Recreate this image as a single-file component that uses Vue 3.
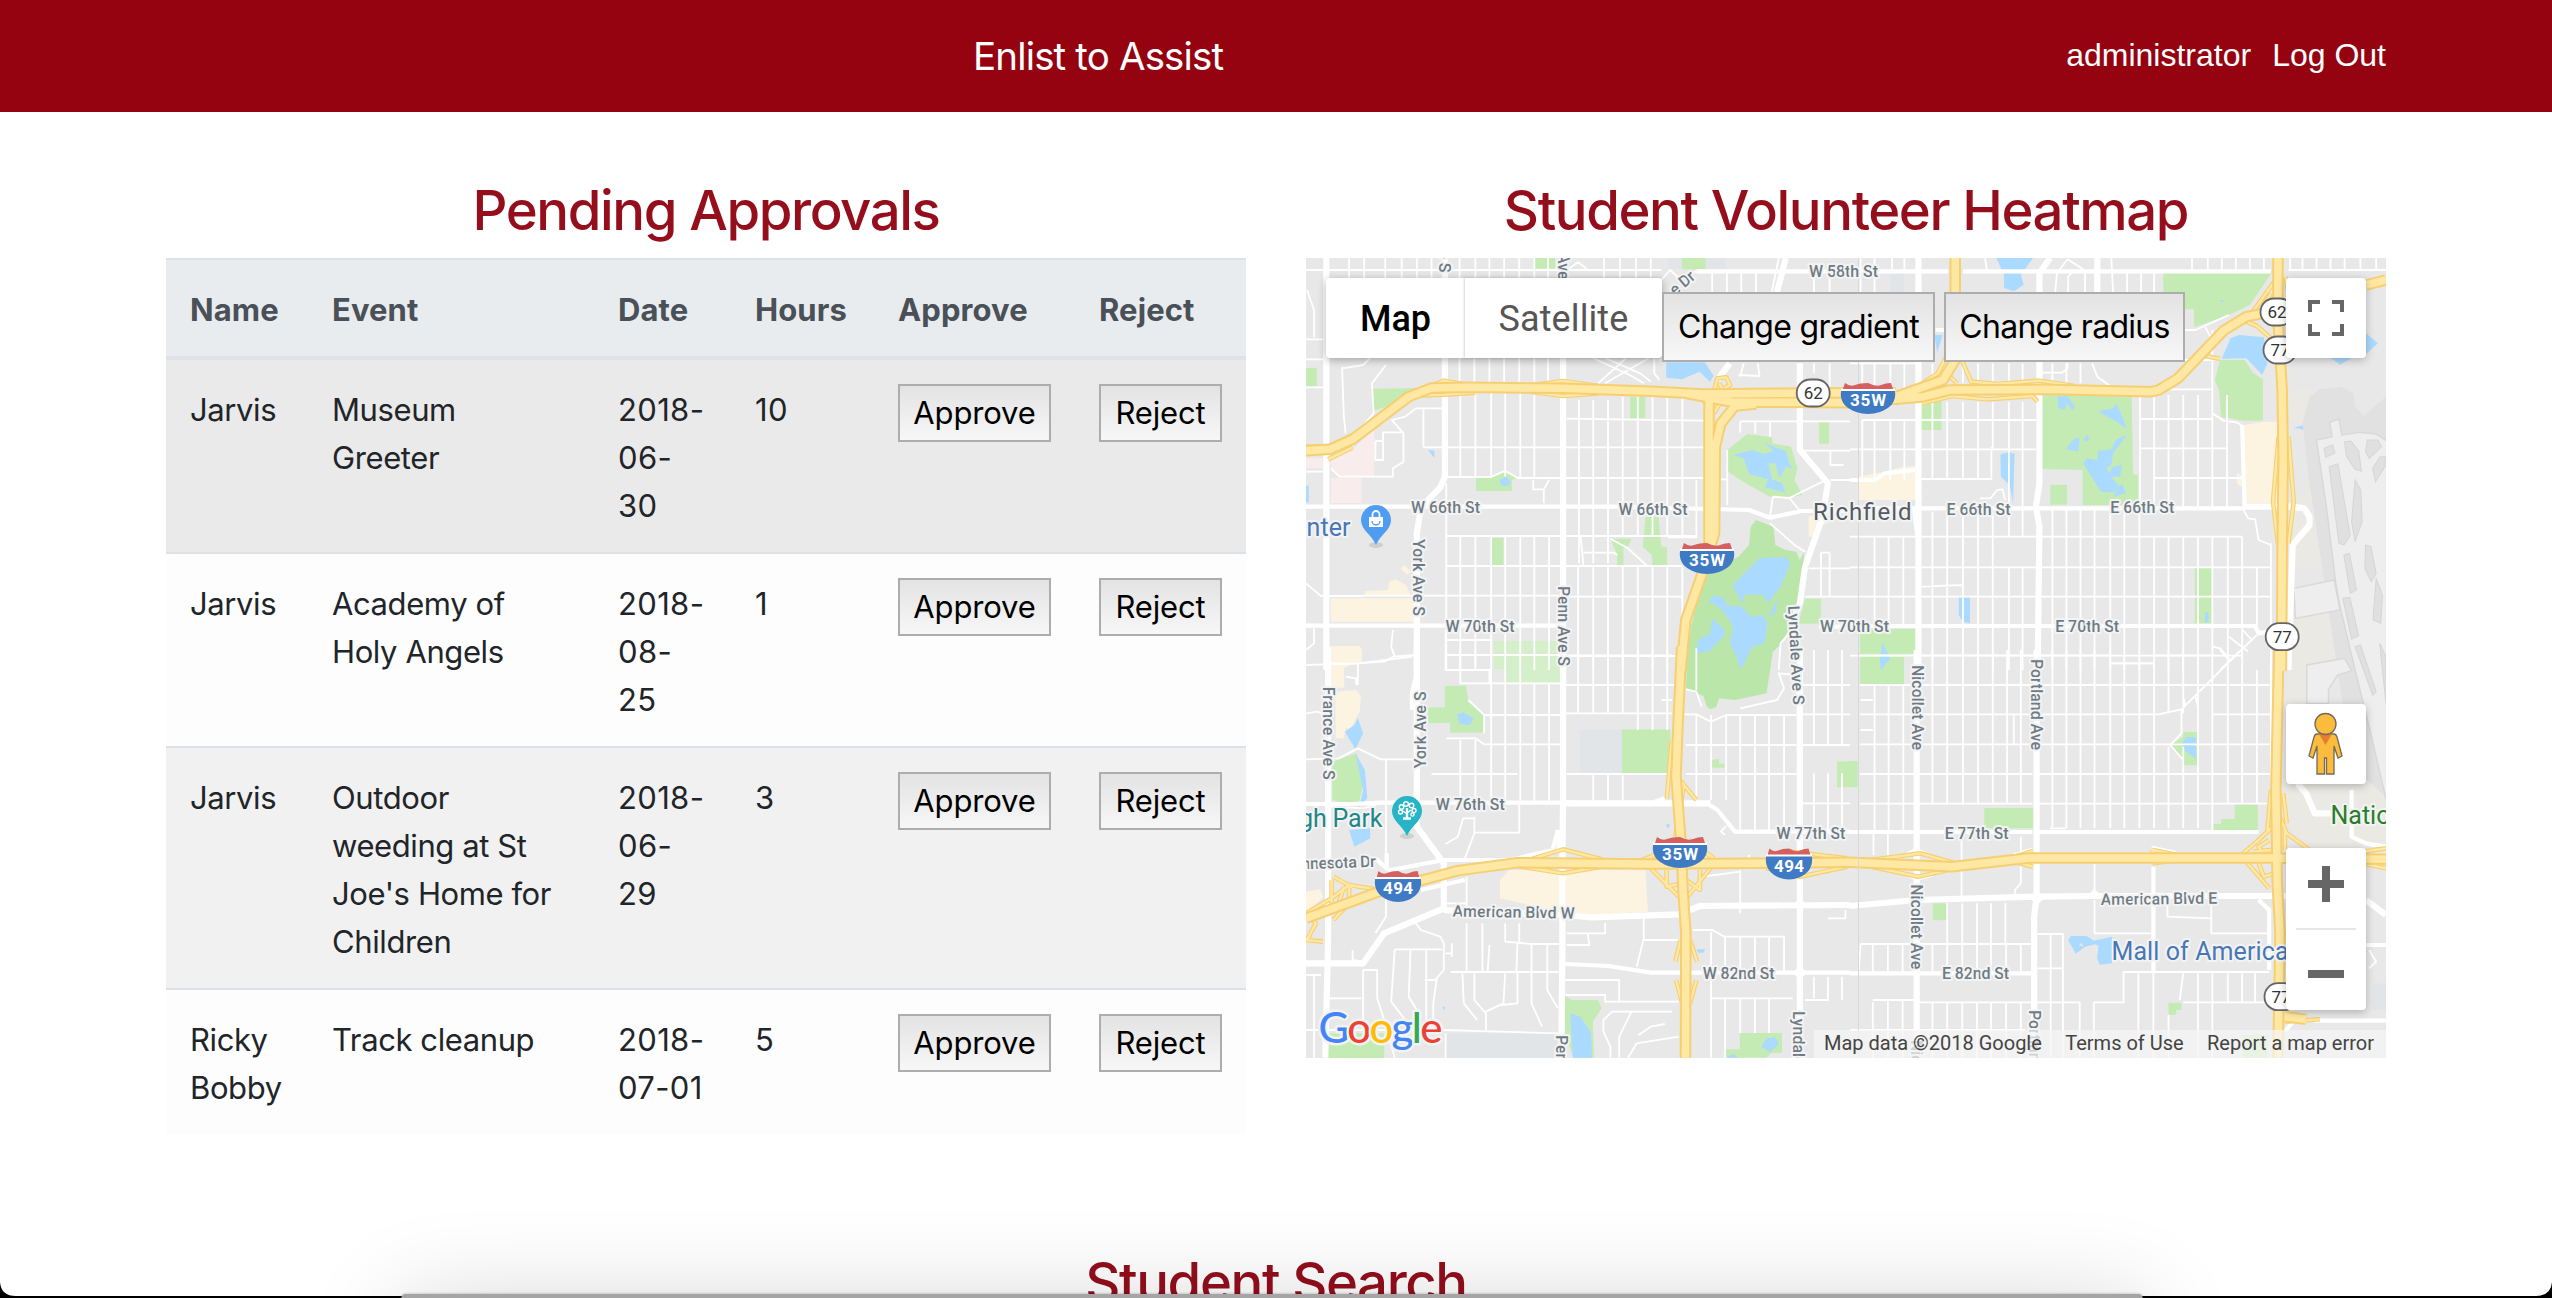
<script setup>
const rows = [
  { name: 'Jarvis', event: 'Museum\nGreeter', date: '2018-\n06-\n30', hours: 10 },
  { name: 'Jarvis', event: 'Academy of\nHoly Angels', date: '2018-\n08-\n25', hours: 1 },
  { name: 'Jarvis', event: "Outdoor\nweeding at St\nJoe's Home for\nChildren", date: '2018-\n06-\n29', hours: 3 },
  { name: 'Ricky\nBobby', event: 'Track cleanup', date: '2018-\n07-01', hours: 5 },
]

// The map is made of four tiles, each with its own coordinate system.
const v = (xs, y1, y2) => xs.map((x) => `M${x} ${y1}V${y2}`).join('')
const h = (ys, x1, x2) => ys.map((y) => `M${x1} ${y}H${x2}`).join('')

const nw = {
  t: 'translate(1300 250) scale(.35077 .33333)',
  slate: 'M1048 24h41v34h-41zM1156 24h58v34h-58z',
  pink: 'M212 530V680H110L88 655V615L150 600zM17 625H66V655H17zM88 684h87v75H88z',
  cream: 'M88 1045h240v70H88zM287 957l10-12 18 18-8 12zM185 1037v-14l65-3 5-25 18-7 30 17 12 32zM88 1188h80l8 10v38H88zM1450 800l55-15v35l-30 5-5 35h-20z',
  green: 'M667 24h60v32h-60zM1089 24h67v34h-67zM17 354h31v55H17zM206 416L365 414L330 440L206 484zM941 440h43v65h-43zM1480 516h28v65h-28zM1218 600L1275 552L1345 562L1348 580L1400 590L1418 655L1410 690L1432 735L1400 742L1340 740L1270 700L1220 665zM502 684H545L585 665L620 684L604 690V723H502zM545 864h35v81h-35zM985 800H1022L1030 890H1046V948H1005L1003 915L977 890zM885 866H945L935 890L922 895V948H904V915zM1440 1046h45v75h-65z',
  dark: 'M1300 810L1350 830L1355 885L1385 900L1415 905L1425 930L1437 905L1430 1010L1405 1110L1375 1180L1348 1205L1330 1330L1240 1350L1195 1345L1187 1370L1170 1378L1160 1370L1150 1338L1100 1315L1105 1200L1115 1130L1150 975L1250 920L1280 885L1285 830z',
  light: 'M553 1173H730L748 1200V1300H587V1258H553z',
  water: 'M1044 337h110l25 40-10 18-30-30-50 23-45-5zM365 600l18 2v22zM1235 615L1290 600L1320 612L1350 604L1325 580L1385 603L1395 640L1405 655L1385 650L1367 684L1355 640L1335 640L1345 688L1375 700L1383 728L1325 712L1335 688L1280 672L1265 625zM568 690l20-11 12 18-5 12-20-2zM17 707h8v50h-8zM1310 925L1385 920L1398 940L1370 1010L1335 1060L1320 1035L1270 1033L1260 1060L1233 1005zM1362 1045L1355 1090L1335 1100zM1180 1035L1210 1045L1215 1065L1260 1070L1285 1100L1320 1095L1333 1120L1325 1180L1290 1190L1257 1258L1240 1210L1225 1180L1235 1130L1200 1075L1165 1055zM1175 1105L1210 1140L1208 1160L1165 1205L1130 1210L1135 1170L1170 1150z',
  minor:
    h([60], 17, 1030) + v([140, 183, 243, 290, 333, 375, 455, 500, 540, 582, 625, 668, 707, 867, 912, 958, 1000], 24, 90) +
    v([455, 497, 540, 582, 625, 668, 707], 324, 395) + 'M793 36L765 58M793 36L818 58' +
    v([795, 836, 878], 450, 940) + v([920, 963, 1005, 1047, 1090], 440, 860) + v([793, 836, 878, 920, 963, 1005, 1047, 1090], 950, 1260) +
    v([457, 500, 545, 585, 628, 668, 710], 858, 1260) + v([457, 500, 545, 585, 628, 668], 420, 680) + v([795, 836, 878, 920, 963], 690, 860) +
    'M760 506L1155 512M352 592H1150M352 592V475M417 681H545L585 662L620 684H1150M417 858H1130M1130 690V862H1050M415 948H1090M755 1040H1090M180 1037H745M415 1170H545M415 1215H545M755 1218H1070M417 700V1260' +
    'M17 412L68 412M17 328H70M17 268H66M20 120L40 180V262M17 665H66M88 655L112 680H265V655L295 635V550L262 510L300 500L330 475H405M215 573H237V547H290M237 573V630H215V573M120 350L125 500L130 550M120 355L180 345L200 324M245 345L205 400L210 490L165 545' +
    'M665 690V718H695L710 690M695 718V760M800 860L808 945M808 908H895L905 915M885 866L935 895L990 948M835 324L940 375L980 400M870 324L970 370L1000 395M995 324L870 400M930 324L850 400M1010 324V370L1025 390' +
    'M1255 515V548M1255 514H1568M1298 514V550M1340 514V560M1218 600V765M1348 740L1340 800M1348 740L1395 744L1490 695M1395 744L1425 782M1340 820L1410 885L1440 905M1190 688H1218M1425 602H1568M1512 602V645H1550M1512 690H1568M1450 955H1568M1485 908V1040M1510 908V1040M1485 908H1510M1440 1040H1568M1410 1130L1370 1180L1365 1260' +
    'M1030 90L1055 60L1080 84L1130 64M1175 64V126M1217 64V126M1258 64V126M1300 64V126M1365 24L1345 126M1465 64V126M1510 64V126M1255 380L1265 340M1250 375L1310 378L1305 340M1465 340V370M1510 340V412' +
    'M17 1000L60 1038H180M88 1240H165L320 1220M265 1140L260 1190L270 1220M40 1135V1180L17 1200',
  mid: 'M17 770H900L1280 780L1340 803L1430 783H1568M17 1127H750M1480 1130H1568M1130 64H1568',
  major: 'M75 24V1260M413 24V680L400 712L345 772L333 850V1260M750 24V1260M1425 340V600L1505 700L1490 800L1440 950L1425 1060L1405 1110M1385 24L1360 126M1225 340L1190 390',
  ramps: 'M340 422L410 392L500 408M340 436L410 434L500 428M660 406L750 393L850 408M660 426L750 438L850 430M1180 425L1190 385L1215 382L1226 405L1205 418L1195 400M17 590L80 590L150 555M80 628L150 592M1150 450L1170 480M1270 432L1200 455L1180 490',
  high: 'M17 602L85 598L150 568L310 440L375 414L480 412L750 415L1000 424L1150 432L1568 428M1100 430L1230 456L1568 458M1166 450V880L1150 960M1300 462L1240 468L1200 520L1184 590L1182 850L1150 960L1100 1110L1086 1262',
}

const ne = {
  t: 'translate(1850 250) scale(.35077 .33333)',
  slate: 'M115 70h38v56h-38zM1500 500h28v60h-28z',
  beige: 'M1250 422H1380V515H1250zM1262 760L1330 700L1410 950H1262zM1255 1110L1400 1080L1430 1200L1300 1300L1250 1300z',
  cream: 'M1122 525L1180 515H1220V758H1130L1122 715L1103 700V668L1122 680zM22 680L100 665L150 650L190 648V690L205 700V750H22z',
  green: 'M893 64H1205L1140 165L1080 195L981 232V178H893zM1055 330L1125 330L1150 370L1177 388V512L1120 512L1058 500L1052 420L1040 390zM545 435H803L807 672L821 676V765H663V660L545 657zM571 704h48v60h-48zM204 452h57v88h-57zM983 954h49v166h-49zM29 1137h159v84h-34v82H29z',
  water: 'M417 24h105l-35 50 8 30-28 20-28-10v-40zM240 255h24l-15 52zM1060 326L1085 265L1110 255L1180 262L1190 340L1175 375L1130 325zM1471 250L1505 280L1471 312zM1370 324h60l-32 20zM429 613L455 606L469 612L465 758L455 705L430 680zM592 440l25-5 25 35-8 12-15-22-8 20-17-5zM713 480L745 478L760 462L772 490L790 538L760 515L715 490zM615 597l25-32 15-2-5 42zM665 570l10-15 8 10-8 10zM790 555L775 575L750 610L745 645L730 655L740 668L750 650L775 645L770 680L745 680L770 715L750 728L715 725L665 640L675 625L705 630L708 602L745 598L760 568zM750 740l25-40 12 30zM310 1040h32v80l-20-5-12-20zM1012 1087h10v30h-10zM92 1178L115 1225L88 1262L85 1230zM1055 150h10v6h-10zM1265 533l30-8v14z',
  minor:
    v([35, 70, 115, 155], 340, 420) + v([35, 70, 115, 155], 510, 690) + v([235, 277, 322, 365, 407, 453, 492], 455, 598) + v([235, 277, 322, 365, 403], 590, 687) +
    v([235, 277, 322, 365, 407], 785, 1260) + v([453, 492], 460, 860) + v([453, 492], 950, 1260) + v([577, 617, 657, 697, 742, 782, 825], 780, 1260) +
    v([867, 908, 950, 992, 1033, 1077, 1118], 860, 1260) + v([867, 908, 950, 992, 1033, 1075], 435, 770) + v([1160], 950, 1130) + 'M827 435V770M1200 880V1260' +
    v([70, 110, 152], 860, 1130) + v([235, 277, 322, 365, 407, 453, 492], 340, 400) + v([577, 617, 657], 340, 400) +
    h([510], 35, 190) + h([510], 204, 530) + h([598], 0, 530) + h([687], 200, 405) + h([860, 952, 1040, 1217], 0, 1118) + h([952, 1040], 1100, 1200) + 'M827 507H1035M827 595H1075M867 684H1118M867 418H1033M1033 240V490L1065 512L1105 518L1122 530M955 240H985L1080 195M955 330H1040M1010 225L1035 275M690 340L705 380L745 410M620 340V355L605 368H540M200 1010L322 1005V952M0 340H190M370 745L400 745L420 720L435 718L442 750M120 24V60M70 24V126M30 24V126M155 24V60' +
    'M385 24L390 60M620 28L665 58M620 28L590 70L585 126M640 60L622 80V126M670 60V126M745 24L750 126M790 60V126M830 60V126M867 60V126M975 24V60M1020 24V60M1060 24V60M1100 24V60M1140 24V60M1180 24V60M1255 24V60M1290 24V60M1330 24V60M1370 24V60M1410 24V60M1455 24V60M1500 24V60M1250 60H1528' +
    'M1120 775L1135 805L1155 808L1165 870L1200 885M1055 1260L1160 1155M1120 1140L1145 1170M1080 1160L1135 1205M1035 1190L1055 1195L1085 1230M742 1217V1260M742 1240H867',
  mid: 'M0 64H280M322 64H1200M0 775H1120M0 1128H1155L1165 1150L1190 1145M0 690H70L100 670L185 660M1118 525L1125 770M244 240H268',
  major: 'M195 24V1260M540 126V70L570 24M540 330V700L530 770L540 830L535 1260M705 24V126M1120 770H1260L1295 775L1310 800L1310 825L1262 885L1250 1260M185 775L195 860',
  ramps: 'M200 405L250 370L275 320M315 320L345 395L420 402L540 392L640 408M205 460L290 438L390 448L520 438L535 455M285 380L305 400M1220 80L1145 190M1200 130L1160 200M1130 215L1160 228L1200 265M1000 310L1030 322L1055 326M1242 80L1248 120M1250 560L1265 755L1250 880M1222 560L1206 755L1220 880M1160 180L1222 240M1222 120L1205 170',
  high: 'M0 428H130M0 455L130 448L210 440L285 420L545 418L860 425L880 420L935 385L1065 242L1130 200L1222 182M300 24V330L265 390L130 440M1220 24V200L1232 420L1235 620L1232 900L1230 1262M1471 105L1528 90',
}

const sw = {
  t: 'translate(1300 650) scale(.35077 .33333)',
  slate: 'M797 238h122v132H797zM410 1150H740V1224H410z',
  cream: 'M88 0h88v33l-50 20v60H88zM100 125L160 120L174 140L170 185L145 235H130L125 265H102zM17 725l40-8 10 25-50 45zM570 690L595 660H985L992 785L830 795L760 790L570 745z',
  green: 'M413 107H473L480 155L525 195V248H428V218L365 220V172H413zM918 238h138v132H918zM1175 330l20-4v15h15v12h-35zM1531 334h37v78h-37zM92 335L160 310L185 380L165 470L92 450zM755 1037L775 1050H850L860 1075L835 1115L838 1223H780L755 1150zM80 1150h160v75H80zM1254 1149h120v60h-30l-15 14h-115v-25h40z',
  water: 'M155 225L165 205L180 250L158 298L128 245zM158 310L185 360L192 445L168 472L180 420L172 380zM448 195L465 187L495 205L485 225L455 222zM140 540L200 535V565L155 590zM1130 898h25l-5 10-15 0zM1043 524l12-2-5 14zM1315 1190l15-25 25-3 10 20-25 25zM405 1070h8v12zM770 1090L800 1100L830 1150L832 1223H778zM1215 1223l20-12 14 12z',
  minor:
    v([457, 500], 0, 60) + v([545, 585, 628], 60, 280) + v([668, 710], 100, 280) + v([793, 836, 878, 920], 0, 190) + v([963, 1005, 1047], 0, 240) +
    v([836, 878, 920], 375, 450) + v([457, 500, 545, 585], 270, 455) + v([628, 668, 710], 285, 455) +
    v([1130, 1172, 1215], 195, 450) + v([1255, 1297, 1337, 1380], 195, 545) + v([1465, 1505, 1545], 0, 285) + v([1465, 1505, 1545], 370, 545) +
    'M415 -60V60H540V100M457 60V100H750M415 15H750M755 16H1060M755 105H1070M525 195H745M755 190H1060M1095 193H1130L1172 215L1215 195H1415M1130 -5V120M1100 118L1130 125L1145 170M1100 285H1415M1100 372H1415M760 372H1055M620 372H375M417 265H500L525 283H745M1430 105H1568M1430 285H1568M1430 193H1568M1430 460H1568M1255 175L1360 150L1380 115L1365 70L1415 75M1030 150H1060M480 150L525 195V250' +
    'M17 45L165 40L240 35L265 20L330 15M165 40V105M17 190L50 185L75 195M17 328L110 325L165 295L230 328H330M245 325V620L250 660M88 470L180 475L230 460M375 458L415 460M495 505L465 505L450 560L415 582M497 500V550L470 625M500 548H625V465M1215 528L1200 545L1212 555M1280 615V640' +
    'M245 690V800L215 850M475 680V800M415 760H475M415 780H430M330 820L345 840L400 860L410 880V960L385 990H355M433 880V920M415 910H433M270 898H405M270 898L260 1055L300 1110M315 900L310 1040L345 1100M360 900V1130M390 985L380 1060V1130M430 966H745M475 820V966M520 820V966M585 820V875L660 882H745M625 820V875M660 882V1060L690 1130M705 882V1020L735 1075M540 885L535 966M620 880L617 966M463 970L467 1060L505 1110M497 970V1050L530 1090V1140M585 970L580 1060L530 1085M760 850H870V820M820 850L825 885H760M620 970V1060L575 1065' +
    'M980 790V865L960 950M980 870H1080M755 990H910V1055M755 1035H870V1055H1080M890 1085H1060M890 1085L865 1110V1145L885 1190V1223M945 1085L910 1160V1223M965 1155L1000 1130L1040 1122M1080 1160L960 1180L935 1223M1120 840H1175L1210 860H1380V966M1172 845V1223M1212 860V966M1255 660V790M1255 860V966M1297 860V966M1337 860V966M1150 680L1255 665M1505 805H1555V780M1172 1045H1405M1212 1045V1223M1255 1045V1149M1297 1045V1149M1337 1045V1149M1465 980V1045M1505 980V1050H1440M1545 980V1050' +
    'M17 1140H410L740 1150M415 1150V1223M80 1045H175M180 960H220L220 1045L240 1110L270 1223M180 960V1130M17 975H60M40 975V1223M150 900V930L180 935M130 80L160 85V105M750 1035H760',
  mid: 'M17 462H150L230 458H800M250 662L410 630H600L720 600L735 540M1100 460H1160L1190 480L1240 545H1568M755 942L880 948L1000 968H1568M17 655L50 640M247 610V655L215 625M345 720L470 690M1430 546H1568M1040 445L1000 460',
  major: 'M80 -10V880L72 1223M333 -10V530L410 640V775L240 850L200 910L180 940H17M333 80L322 130V180M750 -10V440L748 640V900L745 1223M1425 -10V1223M750 460H1170M410 780L480 785L760 795L830 802L1080 793L1140 768L1568 765M740 540V600M1417 765L1425 757L1433 765L1425 773ZM1417 968L1425 960L1433 968L1425 976Z',
  ramps: 'M17 790L90 745L140 705L215 718M95 680L150 712M90 690V770M140 712V760L95 810M20 870L45 820L30 800M17 870L65 875M125 712L110 760M620 640L750 598L860 628M620 648L750 670L860 650M990 628L1060 580M1180 625L1110 570M1000 655L1080 740M1170 655L1105 740M1045 660V710L1090 700M1140 660V720L1100 690M1060 270L1046 445M1075 380L1130 450M1095 400L1070 560M1330 628L1400 605L1560 625M1330 655L1425 680L1560 650M1085 870L1070 935M1112 870L1132 935M1072 990L1090 1060M1130 990L1112 1060M1180 630L1140 590M960 636L1050 600',
  high: 'M17 805L220 727L450 662L620 638L1000 642L1568 637M1088 -10L1077 240L1072 380L1085 560L1092 720L1100 850L1099 1223',
}

const se = {
  t: 'translate(1850 650) scale(.35077 .33333)',
  slate: 'M1490 1000h38v80h-38zM500 1150h85v70h-85z',
  beige: 'M1250 60L1310 0L1330 160L1528 240V590H1310L1240 520z',
  green: 'M383 474h139v61H383zM1097 461h66v83h-127v-22h22v-15h39zM950 246h39v100h-39v-20l-37-40 37-25zM236 760h38v51h-38zM0 333h22v79H0zM908 1058h37v22h-15v14h-22zM1120 1156h70v67h-70zM380 624h60v8h-60z',
  water: 'M948 280l10-18h28v65l-30-25zM630 858h45l20 14 52-12v80l-35 4-8-20 5-35-10-6-30 8-25 20-22-40zM660 878l-8 8 14 4z',
  minor:
    v([70, 110, 152], 105, 540) + v([235, 277, 322, 365, 407, 448, 487], 0, 465) + v([577, 617, 657, 697, 742], 0, 535) + v([782, 825, 867], 40, 535) + v([908, 950], 0, 190) +
    v([908, 950, 992, 1033], 290, 535) + v([992, 1033, 1077, 1118, 1160], 60, 460) +
    h([16, 105, 193, 283, 372, 461], 28, 520) + h([105, 283, 372, 461], 540, 1200) +
    'M540 16H742M867 16H1033M540 193H880L945 178L1110 5M742 0V40H867M1033 193H1200M985 140L992 170M945 178V250L913 285L950 330M950 140L955 165M1055 0L1080 30M30 150H65M30 240H65M467 195V283M1200 0V460L1165 461M1033 545V461M570 535H615' +
    'M67 550V615M108 550V615M150 545M318 550V740M487 560V700L470 720V740M487 655V600M145 620L190 595L240 622M150 670L190 690L235 678M697 640V740M697 720L680 738M697 720L712 738M697 750V850H860M905 770V800L1030 805V850H1195M1030 760V850M905 760V800M860 590L930 605M465 612L520 595' +
    'M30 882H522M30 882L25 966M65 1050H185M65 1057V1223M195 1057H655M655 1057V1223M695 1057H780V966H1195M695 1057V1223M950 1057H1180M822 970V1223M865 970V1223M908 1094V1223M950 970L940 1050M992 970V1223M1033 970V1223M1077 970V1057M1118 970V1057M1155 970V1057M535 852H607V1223M607 955H535M572 852V1223M0 1140H500M1480 900L1500 935L1480 955' +
    v([65, 108, 150], 882, 966) + v([277, 320, 362, 402, 443], 760, 882) + v([235, 277, 320, 362, 402, 445, 487], 882, 966) + v([235, 277, 320, 362, 402, 445, 487], 1057, 1223) + v([108, 150], 1050, 1223),
  mid: 'M0 546H520M530 546H1165M0 970H522M865 650V970M1430 420V560L1470 580L1528 590M1471 885H1528M1165 750L1195 780V960M1320 1112H1528M1240 1145L1265 1112',
  major: 'M190 0V1223M532 0V740L525 800V1223M0 768L190 750L530 740L700 738H1245M1275 400L1300 430L1325 490H1380M1471 750L1528 795M526 745L533 737L541 745L533 753Z',
  ramps: 'M60 630L200 610L300 640M60 650L195 680L300 655M470 620L522 603M470 636L522 650M862 600L960 620M862 640L960 628M862 600V640M1110 620L1165 570L1215 520M1130 636L1195 715M1225 500L1245 550L1310 600M1180 625L1165 590L1195 570M1165 640L1180 680L1210 670M1200 420L1190 540M1235 430L1245 520M1240 1115L1340 1108M1460 605L1528 595M1460 640L1528 655M1150 605L1200 600M1240 600L1240 540',
  high: 'M0 637L290 650L510 624H1215L1528 628M1223 -10L1214 420L1218 700L1226 850L1220 1223M1240 1100L1300 1108',
}

const tiles = [nw, ne, sw, se]
const fills = ['beige', 'cream', 'pink', 'slate', 'light', 'green', 'dark', 'water']

const streets = [
  ['W 58th St', 1809, 276.5, 69], ['W 66th St', 1411, 513, 69], ['W 66th St', 1618.5, 514.5, 69],
  ['W 70th St', 1445.6, 631.5, 69], ['W 70th St', 1820, 631.5, 69], ['E 66th St', 1946.5, 515, 64],
  ['E 66th St', 2110.3, 513, 64], ['E 70th St', 2055.2, 632, 64], ['W 76th St', 1435.8, 810, 69],
  ['W 77th St', 1776.4, 839, 69], ['E 77th St', 1944.7, 839, 64], ['W 82nd St', 1702.7, 979, 72],
  ['E 82nd St', 1942, 979, 67], ['American Blvd W', 1452.6, 916.5, 122, 1], ['American Blvd E', 2100.8, 905, 116.5, -0.7],
  ['York Ave S', 1412.5, 539, 77, 90], ['Penn Ave S', 1557.5, 586, 80, 90], ['York Ave S', 1425.5, 768.3, 77, -90],
  ['France Ave S', 1323, 686.7, 93, 90], ['Lyndale Ave S', 1788, 606, 99, 87], ['Lyndale Ave S', 1793, 1011, 99, 90],
  ['Nicollet Ave', 1911.5, 665, 85, 90], ['Nicollet Ave', 1911, 884.3, 85, 90], ['Nicollet Ave', 1911, 1040, 85, 90],
  ['Portland Ave', 2031, 659, 91, 90], ['Portland Ave', 2029, 1010, 91, 90], ['Penn Ave S', 1556, 1035, 80, 90],
  ['York Ave S', 1439, 195.5, 77, 90], ['Penn Ave S', 1557.5, 213, 80, 90], ['e Dr', 1675, 296, 28, -40],
  ['innesota Dr', 1298, 869.5, 78, -2],
]
const ovals = [['62', 1813.2, 393], ['62', 2277, 312], ['77', 2280, 350], ['77', 2282.2, 636.7], ['77', 2281, 996.7]]
const shields = [['35W', 1868, 383, 1, 36], ['35W', 1707, 543, 1, 36], ['35W', 1680, 837, 1, 36], ['494', 1398, 871, 0.85, 30], ['494', 1789, 848.5, 0.85, 30]]
</script>

<template>
  <div class="page">
    <header class="navbar">
      <span class="brand">Enlist to Assist</span>
      <nav class="links"><a>administrator</a><a>Log Out</a></nav>
    </header>

    <main class="columns">
      <section class="column">
        <h3 class="title">Pending Approvals</h3>
        <table class="approvals">
          <colgroup><col class="c-name"><col class="c-event"><col class="c-date"><col class="c-hours"><col class="c-approve"><col class="c-reject"></colgroup>
          <thead>
            <tr><th>Name</th><th>Event</th><th>Date</th><th>Hours</th><th>Approve</th><th>Reject</th></tr>
          </thead>
          <tbody>
            <tr v-for="(row, i) in rows" :key="i">
              <td>{{ row.name }}</td>
              <td>{{ row.event }}</td>
              <td class="num">{{ row.date }}</td>
              <td class="num">{{ row.hours }}</td>
              <td class="cell-btn"><button class="btn approve">Approve</button></td>
              <td class="cell-btn"><button class="btn reject">Reject</button></td>
            </tr>
          </tbody>
        </table>
      </section>

      <section class="column">
        <h3 class="title">Student Volunteer Heatmap</h3>
        <div class="map">
          <svg class="canvas" viewBox="1306 258 1080 800" width="1080" height="800">
            <template v-for="f in fills" :key="f">
              <g v-for="(tile, i) in tiles" :key="i" :transform="tile.t"><path v-if="tile[f]" :d="tile[f]" :class="f" /></g>
            </template>

            <g :transform="ne.t">
              <path class="apron" d="M1310 440L1340 418L1400 410L1435 430L1440 470L1465 498L1528 440V1640L1440 1560L1400 1330L1310 700L1290 520z" />
              <path class="runway" d="M1330 570L1374 560L1368 517L1394 507L1402 555L1450 547L1500 552L1540 580V1700L1480 1430L1440 1260L1395 1060L1385 1000L1358 770z" />
              <path class="slot" d="M1352 595l24-10 6 25-26 12zM1410 575l18-2 22 30 8 60-18-5-25-40zM1475 570l30 0 10 20-35 35-10-20zM1366 650l25-8 35 215-18 28-14-5zM1440 690l16 30 4 95-20 60-10-60zM1408 915l16-5 20 110-18 10zM1470 885l15 5 15 80-14 25-18-40zM1405 1045l20-3 25 115-20 10zM1500 985l18 50-5 85-22-10zM1440 1190l15-5 45 140-10 10zM1510 1180l18 40v140zM1490 655l22-35 16 0v25l-30 50z" />
              <path class="runway" d="M1265 1015L1380 990L1397 1080L1270 1105zM1302 1245L1410 1225L1430 1262L1390 1275L1364 1318V1360H1302z" />
            </g>

            <g v-for="(tile, i) in tiles" :key="'n' + i" :transform="tile.t"><path class="minor" :d="tile.minor" /></g>
            <g v-for="(tile, i) in tiles" :key="'i' + i" :transform="tile.t"><path class="mid" :d="tile.mid" /><path class="major" :d="tile.major" /></g>
            <g v-for="(tile, i) in tiles" :key="'r' + i" :transform="tile.t"><path class="ramp-edge" :d="tile.ramps" /><path class="ramp" :d="tile.ramps" /></g>
            <g v-for="(tile, i) in tiles" :key="'e' + i" :transform="tile.t"><path class="high-edge" :d="tile.high" /></g>
            <g v-for="(tile, i) in tiles" :key="'h' + i" :transform="tile.t"><path class="high" :d="tile.high" /></g>
            <path class="seam" d="M1858.500 258V1058" />

            <g class="street">
              <text v-for="(s, i) in streets" :key="i" :transform="`translate(${s[1]} ${s[2]}) rotate(${s[4] || 0})`" :textLength="s[3]">{{ s[0] }}</text>
            </g>
            <text class="place city" x="1813" y="520" textLength="98.500">Richfield</text>
            <text class="place shop" x="1306.500" y="536" textLength="44">nter</text>
            <text class="place shop" x="2111.500" y="960" textLength="177">Mall of America</text>
            <text class="place park" x="1299" y="826.500" textLength="83.500">gh Park</text>
            <text class="place nation" x="2330.500" y="823.500">National</text>

            <g v-for="(o, i) in ovals" :key="'o' + i" :transform="`translate(${o[1]} ${o[2]})`">
              <rect class="oval" x="-16.500" y="-13.500" width="33" height="27" rx="13.500" />
              <text class="route" y="6" text-anchor="middle">{{ o[0] }}</text>
            </g>
            <g v-for="(s, i) in shields" :key="'s' + i" :transform="`translate(${s[1]} ${s[2]})`">
              <g :transform="`scale(${s[3]} 1)`">
                <path fill="#fff" d="M-27 5.500H27V10H-27z" />
                <path fill="#d65f5f" d="M-25 6L-23 0Q-18 4-13 2T0 0Q8 4 13 2T23 0L25 6z" />
                <path fill="#3f7bc5" d="M-27 8H27Q29 23 12 29Q0 33-12 29Q-29 23-27 8z" />
              </g>
              <text class="inter" y="23" :x="-s[4] / 2" :textLength="s[4]">{{ s[0] }}</text>
            </g>

            <g transform="translate(1376 520)">
              <ellipse cy="25" rx="7" ry="3" fill="#cfcfcf" />
              <path fill="#4f9cf3" d="M0-15A15 15 0 0 1 15 0C15 10 4 15 0 25C-4 15-15 10-15 0A15 15 0 0 1 0-15z" />
              <path fill="#fff" d="M-7-3H7V7H-7z" /><path fill="none" stroke="#fff" stroke-width="1.800" d="M-3.500-3V-5.500A3.500 3.500 0 0 1 3.500-5.500V-3" />
              <path fill="none" stroke="#4f9cf3" stroke-width="1.400" d="M-4 1A4 4 0 0 0 4 1" />
            </g>
            <g transform="translate(1407 811)">
              <ellipse cy="25" rx="7" ry="3" fill="#cfcfcf" />
              <path fill="#25b5c7" d="M0-15A15 15 0 0 1 15 0C15 10 4 15 0 25C-4 15-15 10-15 0A15 15 0 0 1 0-15z" />
              <g fill="none" stroke="#fff" stroke-width="1.400"><circle cx="-6.500" cy="1" r="2" /><circle cx="-5.500" cy="-4" r="2.200" /><circle cx="-1" cy="-7" r="2.300" /><circle cx="4.500" cy="-5.500" r="2.300" /><circle cx="7" cy="-.5" r="2" /><circle cx="5.500" cy="3.500" r="1.600" /><path stroke-width="2.400" d="M0-3V8M-4 7.500H4" /><path d="M0 3L-4 0M0 2L4-1" /></g>
            </g>

            <text class="google" x="1318.500" y="1043" textLength="124"><tspan fill="#4285f4">G</tspan><tspan fill="#ea4335">o</tspan><tspan fill="#fbbc05">o</tspan><tspan fill="#4285f4">g</tspan><tspan fill="#34a853">l</tspan><tspan fill="#ea4335">e</tspan></text>
          </svg>

          <div class="map-type"><span class="active">Map</span><span class="other">Satellite</span></div>
          <div class="actions"><button class="btn gradient">Change gradient</button><button class="btn radius">Change radius</button></div>

          <div class="control full">
            <svg width="36" height="36" viewBox="0 0 36 36" fill="none" stroke="#666" stroke-width="4"><path d="M2 12V2H12M24 2H34V12M34 24V34H24M12 34H2V24" /></svg>
          </div>
          <div class="control pegman">
            <svg width="36" height="64" viewBox="0 0 36 64" stroke="#736a58" stroke-width="1.300">
              <path fill="#fbbc3e" d="M9 22H26Q28 22 29 25L34 44L30 46L26 34V62H18.500V46H16.500V62H9V34L5 46L1 44L6 25Q7 22 9 22z" />
              <path fill="#e37f31" stroke="none" d="M11 22H24L17.500 33z" /><circle fill="#fbbc3e" cx="17.500" cy="12" r="10.500" />
            </svg>
          </div>
          <div class="control zoom">
            <svg width="80" height="162" viewBox="0 0 80 162"><path fill="#666" d="M22 32H36V18H44V32H58V40H44V54H36V40H22zM22 122H58V130H22z" /><path fill="#e6e6e6" d="M10 80H70V82H10z" /></svg>
          </div>
          <div class="attribution"><span>Map data ©2018 Google</span><span>Terms of Use</span><span>Report a map error</span></div>
        </div>
      </section>
    </main>

    <h3 class="title search">Student Search</h3>

    <svg class="window-edge" viewBox="0 0 2552 16" width="2552" height="16"><path d="M0 0Q1 14 16 14H2536Q2551 14 2552 0V16H0z" /></svg>
    <div class="overlap"></div>
  </div>
</template>

<style>
body { margin: 0; background: #fff; overflow: hidden; }
</style>

<style scoped>
.page { position: relative; width: 2552px; height: 1298px; overflow: hidden; background: #fff; color: #212529; font: 31px/48px Inter, "Liberation Sans", sans-serif; }
.navbar { box-sizing: border-box; display: flex; justify-content: space-between; align-items: center; height: 112px; padding: 0 166px 0 973px; background: #960310; color: #fff; }
.brand { font-size: 38.5px; letter-spacing: -.85px; }
.links { display: flex; gap: 21px; font: 32px/48px "Liberation Sans", Arial, sans-serif; margin-top: -2px; }
.columns { display: flex; gap: 60px; padding: 64px 166px 0; }
.column { width: 1080px; }
.title { margin: 0 0 13px; font-size: 54.5px; line-height: 69px; font-weight: 500; text-align: center; color: #940e1c; letter-spacing: -1.4px; }
.approvals { width: 1080px; table-layout: fixed; border-collapse: separate; border-spacing: 0; letter-spacing: -.4px; }
.c-name { width: 142px; }
.c-event { width: 286px; }
.c-date { width: 137px; }
.c-hours { width: 143px; }
.c-approve { width: 201px; }
.c-reject { width: 171px; }
th { box-sizing: border-box; height: 102px; padding: 26px 0 22px 24px; border-top: 2px solid #dee2e6; border-bottom: 4px solid #dee2e6; background: #e9ecef; color: #495057; text-align: left; font-weight: 700; letter-spacing: .1px; white-space: nowrap; }
td { padding: 25.5px 0 22.5px 24px; border-top: 2px solid #dee2e6; background: #fdfdfd; vertical-align: top; white-space: pre-line; }
.cell-btn { padding-top: 24px; }
.num { letter-spacing: .35px; }
tr:nth-child(odd) td { background: #f1f1f1; }
tr:first-child td { border-top: 0; background: #eaeaea; }
.btn { box-sizing: border-box; display: block; height: 58px; padding: 0; border: 2px solid #adadad; border-radius: 0; background: linear-gradient(#e3e3e3, #f7f7f7); color: #000; font: 31px/54px Inter, "Liberation Sans", sans-serif; letter-spacing: -.15px; white-space: nowrap; }
.approve { width: 153px; }
.reject { width: 123px; }
.map { position: relative; width: 1080px; height: 800px; overflow: hidden; background: #e8e8e8; font-family: Roboto, sans-serif; }
.canvas { display: block; }
.beige { fill: #ebe9e4; }
.cream { fill: #fcf3e0; }
.pink { fill: #f8ecec; }
.slate { fill: #e2e5e8; }
.light { fill: #d6efcb; }
.green { fill: #c5ebb5; }
.dark { fill: #bbe6a9; }
.water { fill: #aadaff; }
.apron { fill: #e1e1e1; }
.runway { fill: #eee; stroke: #d8d8d8; stroke-width: 4; }
.slot { fill: #e0e0e0; stroke: #d6d6d6; stroke-width: 3; }
.minor, .mid, .major, .ramp, .ramp-edge, .high, .high-edge { fill: none; vector-effect: non-scaling-stroke; stroke-linejoin: round; }
.minor { stroke: #fff; stroke-width: 1.8px; }
.mid { stroke: #fff; stroke-width: 4.2px; }
.major { stroke: #fff; stroke-width: 6.2px; }
.ramp-edge { stroke: #f5cf72; stroke-width: 4.6px; }
.ramp { stroke: #ffe8a3; stroke-width: 2.4px; }
.high-edge { stroke: #f6cf72; stroke-width: 11.5px; }
.high { stroke: #ffe8a3; stroke-width: 7.5px; }
.seam { stroke: #d6d8dc; stroke-width: 1; }
.street { font-size: 16px; font-weight: 500; fill: #6e7b84; stroke: #f3f3f3; stroke-width: 4px; paint-order: stroke; stroke-linejoin: round; }
.place { font-size: 25px; stroke: #f3f3f3; stroke-width: 4px; paint-order: stroke; stroke-linejoin: round; }
.city { fill: #535a62; font-size: 24px; }
.shop { fill: #4777b6; }
.park { fill: #1f868a; }
.nation { fill: #287e29; }
.oval { fill: #fff; stroke: #666; stroke-width: 1.8px; }
.route { font-size: 17px; fill: #333; }
.inter { font-size: 17px; font-weight: 700; fill: #fff; }
.google { font: 500 42px Lato, sans-serif; stroke: #f3f3f3; stroke-width: 5px; paint-order: stroke; stroke-linejoin: round; }
.map-type { position: absolute; left: 20px; top: 20px; display: flex; height: 80px; border-radius: 4px; background: #fff; box-shadow: 0 2px 8px rgba(0, 0, 0, .3); font-size: 36px; line-height: 83px; text-align: center; }
.active { width: 139px; color: #000; font-weight: 500; }
.other { width: 197px; box-shadow: -1px 0 2px rgba(0, 0, 0, .16); color: #565656; letter-spacing: .1px; }
.actions { position: absolute; left: 356px; top: 34px; display: flex; gap: 9px; }
.actions .btn { height: 70px; line-height: 66px; font-size: 32px; letter-spacing: -.7px; }
.gradient { width: 273px; }
.radius { width: 241px; }
.control { position: absolute; left: 980px; display: flex; align-items: center; justify-content: center; width: 80px; height: 80px; border-radius: 4px; background: #fff; box-shadow: 0 2px 8px rgba(0, 0, 0, .25); }
.full { top: 20px; }
.pegman { top: 446px; }
.zoom { top: 590px; height: 162px; }
.attribution { position: absolute; right: 0; bottom: 0; box-sizing: border-box; display: flex; justify-content: space-between; width: 572px; height: 28px; padding: 0 12px 0 10px; background: rgba(245, 245, 245, .72); color: #444; font-size: 20px; line-height: 26px; }
.search { padding-top: 114px; }
.window-edge { position: absolute; left: 0; bottom: 0; }
.overlap { position: absolute; left: 401px; top: 1294px; width: 1742px; height: 500px; border-radius: 5px 5px 0 0; background: #a5a5a5; box-shadow: 0 0 3px rgba(0, 0, 0, .3), 0 8px 95px rgba(0, 0, 0, .17); }
</style>
